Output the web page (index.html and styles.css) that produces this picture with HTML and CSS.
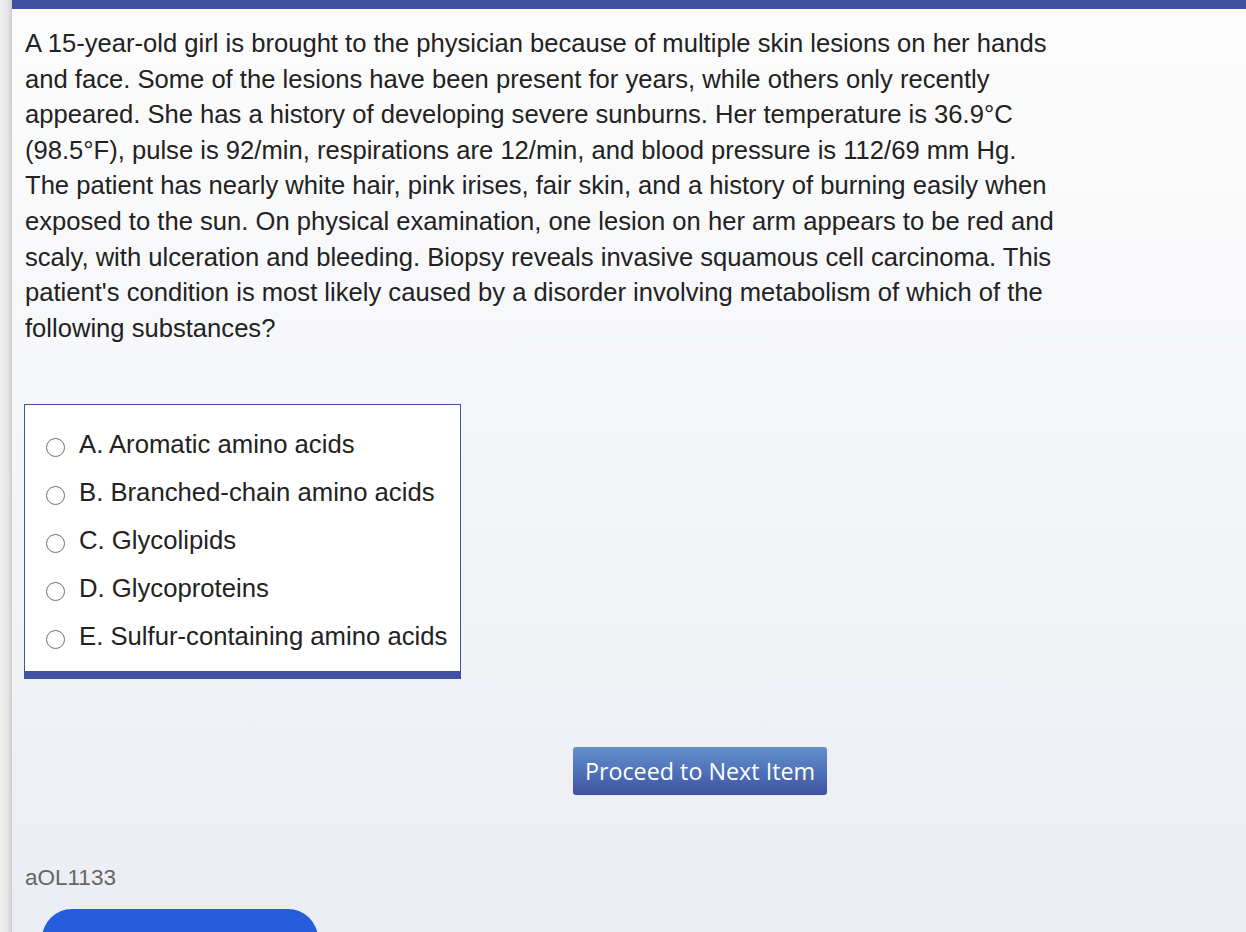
FILE: index.html
```html
<!DOCTYPE html>
<html>
<head>
<meta charset="utf-8">
<link rel="stylesheet" href="styles.css">
</head>
<body>
<div class="page">
  <div class="rail"></div>
  <div class="main">
    <div class="topbar"></div>
    <div class="content">
      <p class="stem">A 15-year-old girl is brought to the physician because of multiple skin lesions on her hands and face. Some of the lesions have been present for years, while others only recently appeared. She has a history of developing severe sunburns. Her temperature is 36.9°C (98.5°F), pulse is 92/min, respirations are 12/min, and blood pressure is 112/69 mm Hg. The patient has nearly white hair, pink irises, fair skin, and a history of burning easily when exposed to the sun. On physical examination, one lesion on her arm appears to be red and scaly, with ulceration and bleeding. Biopsy reveals invasive squamous cell carcinoma. This patient's condition is most likely caused by a disorder involving metabolism of which of the following substances?</p>
      <div class="choices">
        <label class="choice"><span class="radio"></span><span>A. Aromatic amino acids</span></label>
        <label class="choice"><span class="radio"></span><span>B. Branched-chain amino acids</span></label>
        <label class="choice"><span class="radio"></span><span>C. Glycolipids</span></label>
        <label class="choice"><span class="radio"></span><span>D. Glycoproteins</span></label>
        <label class="choice"><span class="radio"></span><span>E. Sulfur-containing amino acids</span></label>
      </div>
      <div class="actions">
        <button class="next">Proceed to Next Item</button>
      </div>
      <div class="qid">aOL1133</div>
      <div class="pill"></div>
    </div>
  </div>
</div>
</body>
</html>
```
FILE: styles.css
```css
html, body {
  margin: 0;
  padding: 0;
  height: 100%;
  overflow: hidden;
}
body {
  font-family: "Liberation Sans", Arial, sans-serif;
  background: #fcfcfc;
}
.page {
  display: flex;
  height: 932px;
}
.rail {
  width: 12px;
  flex: none;
  background: linear-gradient(to right, #f1f1f1 0%, #e6e6e6 60%, #d6d6d6 90%, #c4c4c4 100%);
}
.main {
  flex: 1;
  display: flex;
  flex-direction: column;
  background: linear-gradient(to bottom, #fcfcfc 0%, #f6f7f9 40%, #ebedf4 100%);
  overflow: hidden;
}
.topbar {
  height: 9px;
  background: #3f51a0;
  flex: none;
}
.content {
  padding: 17px 0 0 13px;
}
.stem {
  margin: 0;
  width: 1034px;
  font-size: 25.6px;
  line-height: 35.6px;
  color: #222;
}
.choices {
  margin-top: 58px;
  margin-left: -1px;
  width: 435px;
  border: 1px solid #3f51a0;
  border-bottom: 8px solid #3f51a0;
  background: #fff;
  padding: 15px 0 11px 0;
  display: flex;
  flex-direction: column;
}
.choice {
  height: 48px;
  display: flex;
  align-items: center;
  font-size: 25.7px;
  color: #222;
  white-space: nowrap;
}
.radio {
  width: 17px;
  height: 17px;
  border: 1.3px solid #707070;
  border-radius: 50%;
  margin-left: 21px;
  margin-right: 14px;
  margin-top: 6px;
  flex: none;
  background: #fff;
}
.actions {
  margin-top: 68px;
  padding-left: 548px;
}
.next {
  width: 254px;
  height: 48px;
  border: none;
  border-radius: 3px;
  background: linear-gradient(to bottom, #6491cc 0%, #4f72b8 50%, #3f52a1 100%);
  color: #fff;
  font-family: "Open Sans", sans-serif;
  font-size: 23.3px;
  padding: 0;
}
.qid {
  margin-top: 70px;
  font-size: 22.5px;
  color: #666;
  line-height: 26px;
}
.pill {
  margin-top: 18px;
  margin-left: 17px;
  width: 276px;
  height: 60px;
  border-radius: 30px 30px 0 0 / 30px 30px 0 0;
  background: #255cdc;
}
```
